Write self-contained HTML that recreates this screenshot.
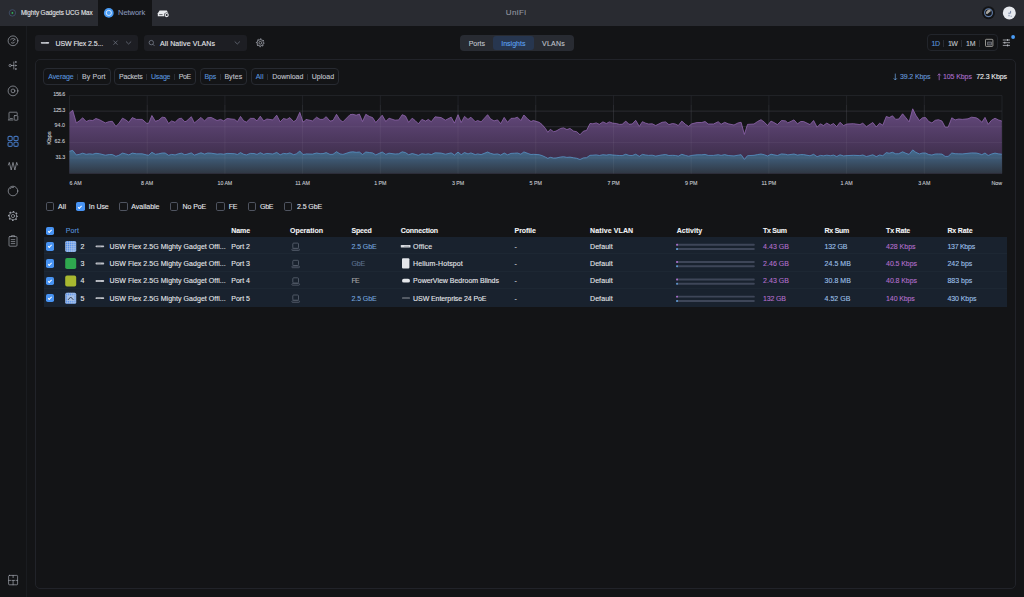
<!DOCTYPE html>
<html lang="en">
<head>
<meta charset="utf-8">
<title>UniFi Network</title>
<style>
html,body{margin:0;padding:0;background:#131416;}
body{width:1024px;height:597px;position:relative;overflow:hidden;font-family:"Liberation Sans",sans-serif;}
.abs{position:absolute;}
.t{position:absolute;white-space:pre;font-family:"Liberation Sans",sans-serif;-webkit-text-stroke:0.1px currentColor;}
.box{position:absolute;box-sizing:border-box;}
.grp{position:absolute;box-sizing:border-box;border:1px solid #272a31;border-radius:4px;top:68.4px;height:16.3px;}
.sep{position:absolute;width:1px;background:#292c33;}
.cb{position:absolute;box-sizing:border-box;width:8.4px;height:8.4px;border:1px solid #4f5460;border-radius:1.8px;}
.cb.on{border:none;background:#4793f3;}
.cb.on:after{content:"";position:absolute;left:3.2px;top:2.2px;width:1.3px;height:2.7px;border:solid #f4f8ff;border-width:0 0.75px 0.75px 0;transform:rotate(45deg);}
.row{position:absolute;left:43.6px;width:963.6px;height:17.45px;background:#19222e;box-sizing:border-box;border-bottom:1px solid #1d2733;}
</style>
</head>
<body>
<!-- top bar -->
<div class="box" style="left:0;top:0;width:1024px;height:26px;background:#292b31"></div>
<div class="box" style="left:97.5px;top:0;width:54px;height:26px;background:#131416"></div>
<!-- sidebar -->
<div class="box" style="left:0;top:26px;width:27px;height:571px;border-right:1px solid #1a1c20"></div>
<!-- toolbar -->
<div class="box" style="left:35px;top:35px;width:103px;height:16px;background:#1d1e23;border-radius:3px"></div>
<div class="box" style="left:144px;top:35px;width:103px;height:16px;background:#1d1e23;border-radius:3px"></div>
<div class="box" style="left:459.5px;top:34.5px;width:114.3px;height:16.3px;background:#282b32;border-radius:4px"></div>
<div class="box" style="left:493.2px;top:35.5px;width:40.6px;height:14.4px;background:#27364f;border-radius:3px"></div>
<div class="box" style="left:927px;top:34.4px;width:71.4px;height:16.4px;border:1px solid #22252b;border-radius:4px"></div>
<div class="sep" style="left:943px;top:39.5px;height:7px"></div>
<div class="sep" style="left:961.3px;top:39.5px;height:7px"></div>
<div class="sep" style="left:979.2px;top:39.5px;height:7px"></div>
<!-- card -->
<div class="box" style="left:35px;top:59.2px;width:981px;height:529.4px;border:1px solid #212329;border-radius:5px"></div>
<div class="grp" style="left:43px;width:67.7px"></div><div class="sep" style="left:77.3px;top:73.5px;height:6.5px"></div>
<div class="grp" style="left:114.4px;width:81.4px"></div><div class="sep" style="left:146.4px;top:73.5px;height:6.5px"></div><div class="sep" style="left:174.3px;top:73.5px;height:6.5px"></div>
<div class="grp" style="left:200px;width:46.7px"></div><div class="sep" style="left:219.5px;top:73.5px;height:6.5px"></div>
<div class="grp" style="left:251px;width:88px"></div><div class="sep" style="left:267.1px;top:73.5px;height:6.5px"></div><div class="sep" style="left:307.4px;top:73.5px;height:6.5px"></div>
<svg class="abs" style="left:0;top:0" width="1024" height="200" viewBox="0 0 1024 200">
<defs>
<linearGradient id="gp" x1="0" y1="108" x2="0" y2="174" gradientUnits="userSpaceOnUse"><stop offset="0" stop-color="#664a7f"/><stop offset="1" stop-color="#31253b"/></linearGradient>
<linearGradient id="gb" x1="0" y1="150" x2="0" y2="174" gradientUnits="userSpaceOnUse"><stop offset="0" stop-color="#466d91"/><stop offset="1" stop-color="#2f3641"/></linearGradient>
</defs>
<g stroke="#2a2c33" stroke-width="0.6" fill="none">
<path d="M69.5,95.50 H1002"/><path d="M69.5,111.12 H1002"/><path d="M69.5,126.74 H1002"/><path d="M69.5,142.36 H1002"/><path d="M69.5,157.98 H1002"/><path d="M69.5,173.60 H1002"/>
<path d="M69.50,95.5 V173.6"/><path d="M147.21,95.5 V173.6"/><path d="M224.92,95.5 V173.6"/><path d="M302.62,95.5 V173.6"/><path d="M380.33,95.5 V173.6"/><path d="M458.04,95.5 V173.6"/><path d="M535.75,95.5 V173.6"/><path d="M613.46,95.5 V173.6"/><path d="M691.17,95.5 V173.6"/><path d="M768.88,95.5 V173.6"/><path d="M846.58,95.5 V173.6"/><path d="M924.29,95.5 V173.6"/><path d="M1002.00,95.5 V173.6"/>
</g>
<path d="M69.5,112.9 L72.7,110.3 L76.3,122.9 L79.1,121.1 L82.7,117.8 L86.2,121.5 L89.5,120.2 L92.7,120.5 L95.9,118.5 L99.4,119.7 L105.3,122.9 L109.4,121.5 L112.3,121.3 L115.9,126.4 L118.8,123.5 L122.5,118.2 L125.8,119.9 L128.8,122.3 L132.3,117.6 L136.4,119.4 L142.2,119.4 L146.9,123.5 L148.7,123.2 L151.9,115.5 L155.4,121.3 L158.7,120.2 L162.2,117.2 L165.1,117.6 L168.6,123.5 L171.6,120.9 L175.1,122.3 L178.6,118.8 L181.5,118.2 L184.5,121.5 L186.0,121.5 L191.3,116.7 L194.4,122.9 L201.0,117.4 L204.5,120.9 L207.7,117.8 L211.2,117.4 L217.1,120.5 L220.6,119.4 L223.8,120.9 L227.1,118.5 L234.7,119.4 L237.4,121.7 L240.5,116.4 L243.7,120.9 L246.4,122.1 L250.3,118.4 L254.0,118.4 L257.0,120.9 L260.3,116.2 L263.7,120.9 L266.9,119.0 L272.8,119.9 L276.7,115.2 L280.2,121.9 L283.4,118.5 L286.9,119.4 L289.8,117.6 L293.7,121.7 L296.3,119.9 L299.8,112.3 L303.0,122.1 L305.6,120.2 L306.0,119.4 L312.5,120.9 L316.6,117.2 L320.1,119.4 L323.0,119.4 L326.2,116.7 L330.0,121.1 L333.0,120.5 L336.5,114.3 L340.0,119.9 L342.9,121.9 L350.0,114.7 L352.9,114.3 L356.2,115.2 L359.4,114.1 L362.5,121.5 L365.8,114.3 L369.3,116.4 L372.6,117.6 L375.8,122.5 L382.2,115.2 L385.8,121.5 L389.0,118.2 L395.1,120.2 L398.7,119.9 L402.2,114.7 L405.5,116.1 L408.6,122.3 L412.2,118.2 L415.1,120.5 L418.4,123.8 L421.9,119.4 L425.6,121.1 L428.3,119.4 L431.3,121.7 L435.1,116.8 L441.2,117.6 L445.4,120.2 L451.2,117.2 L454.5,123.1 L458.0,114.7 L461.2,122.5 L464.5,116.4 L468.0,119.4 L470.9,117.2 L475.3,121.7 L477.6,120.5 L481.1,121.9 L487.6,114.7 L490.5,118.8 L494.0,120.9 L497.6,119.9 L500.7,123.7 L504.2,117.4 L507.5,122.3 L511.0,118.4 L514.6,118.2 L517.5,117.2 L520.8,120.5 L523.9,115.0 L528.1,119.4 L531.0,121.5 L533.3,120.5 L539.2,122.3 L542.1,124.6 L545.6,128.7 L547.8,132.3 L550.3,129.3 L553.6,131.7 L556.0,131.1 L560.7,128.4 L563.6,127.9 L566.9,129.6 L570.0,128.4 L573.6,131.1 L576.7,131.7 L580.0,134.8 L583.5,131.1 L586.5,130.5 L590.0,123.5 L592.9,123.8 L596.2,122.9 L599.4,124.3 L602.9,121.9 L606.4,123.5 L609.3,121.9 L612.9,123.2 L616.4,123.5 L619.3,124.4 L622.2,124.3 L625.8,121.1 L629.0,124.3 L632.2,124.0 L635.7,120.3 L639.3,126.4 L642.4,121.7 L645.7,123.2 L648.6,124.0 L652.2,123.8 L655.7,125.5 L662.1,122.3 L665.6,121.9 L668.9,124.6 L672.5,123.5 L675.4,124.0 L678.3,125.5 L681.8,121.1 L685.4,124.3 L688.5,126.4 L691.8,123.8 L697.1,122.5 L701.8,122.5 L705.1,121.5 L708.2,124.0 L713.5,124.0 L718.2,121.7 L721.1,124.3 L724.7,122.3 L728.2,123.8 L734.0,125.0 L738.1,122.9 L741.1,122.3 L744.4,134.4 L747.5,124.4 L754.0,124.0 L757.5,121.5 L761.0,119.7 L764.5,122.3 L767.5,125.5 L771.0,121.1 L773.9,122.5 L777.4,124.6 L781.5,120.5 L785.6,120.9 L787.8,122.9 L794.0,119.9 L797.5,123.8 L800.7,121.5 L803.6,121.5 L810.0,124.6 L813.6,120.5 L817.1,127.2 L820.4,123.8 L823.5,125.5 L826.8,123.1 L830.3,125.2 L833.5,123.5 L836.7,126.7 L840.0,122.3 L843.5,125.5 L847.0,124.0 L853.4,123.7 L859.9,124.6 L862.8,123.2 L866.4,126.7 L872.8,122.5 L876.3,127.0 L879.6,123.2 L882.8,125.2 L886.3,116.4 L889.2,117.6 L892.5,115.8 L895.7,119.4 L898.8,119.0 L902.6,113.8 L905.9,117.8 L909.1,121.9 L912.7,108.8 L915.8,115.2 L919.4,120.5 L922.5,117.8 L925.6,117.6 L928.7,121.5 L931.9,122.9 L935.2,120.3 L938.5,119.7 L942.0,121.1 L945.2,127.2 L948.1,127.2 L951.8,117.8 L955.1,119.9 L958.7,119.0 L962.2,119.4 L968.0,118.8 L971.6,117.2 L976.2,117.8 L979.2,119.6 L981.8,122.3 L985.0,117.4 L988.2,124.3 L991.5,120.3 L995.0,118.2 L998.3,119.9 L1001.8,121.1 L1002,173.6 L69.5,173.6 Z" fill="url(#gp)"/>
<path d="M69.5,112.9 L72.7,110.3 L76.3,122.9 L79.1,121.1 L82.7,117.8 L86.2,121.5 L89.5,120.2 L92.7,120.5 L95.9,118.5 L99.4,119.7 L105.3,122.9 L109.4,121.5 L112.3,121.3 L115.9,126.4 L118.8,123.5 L122.5,118.2 L125.8,119.9 L128.8,122.3 L132.3,117.6 L136.4,119.4 L142.2,119.4 L146.9,123.5 L148.7,123.2 L151.9,115.5 L155.4,121.3 L158.7,120.2 L162.2,117.2 L165.1,117.6 L168.6,123.5 L171.6,120.9 L175.1,122.3 L178.6,118.8 L181.5,118.2 L184.5,121.5 L186.0,121.5 L191.3,116.7 L194.4,122.9 L201.0,117.4 L204.5,120.9 L207.7,117.8 L211.2,117.4 L217.1,120.5 L220.6,119.4 L223.8,120.9 L227.1,118.5 L234.7,119.4 L237.4,121.7 L240.5,116.4 L243.7,120.9 L246.4,122.1 L250.3,118.4 L254.0,118.4 L257.0,120.9 L260.3,116.2 L263.7,120.9 L266.9,119.0 L272.8,119.9 L276.7,115.2 L280.2,121.9 L283.4,118.5 L286.9,119.4 L289.8,117.6 L293.7,121.7 L296.3,119.9 L299.8,112.3 L303.0,122.1 L305.6,120.2 L306.0,119.4 L312.5,120.9 L316.6,117.2 L320.1,119.4 L323.0,119.4 L326.2,116.7 L330.0,121.1 L333.0,120.5 L336.5,114.3 L340.0,119.9 L342.9,121.9 L350.0,114.7 L352.9,114.3 L356.2,115.2 L359.4,114.1 L362.5,121.5 L365.8,114.3 L369.3,116.4 L372.6,117.6 L375.8,122.5 L382.2,115.2 L385.8,121.5 L389.0,118.2 L395.1,120.2 L398.7,119.9 L402.2,114.7 L405.5,116.1 L408.6,122.3 L412.2,118.2 L415.1,120.5 L418.4,123.8 L421.9,119.4 L425.6,121.1 L428.3,119.4 L431.3,121.7 L435.1,116.8 L441.2,117.6 L445.4,120.2 L451.2,117.2 L454.5,123.1 L458.0,114.7 L461.2,122.5 L464.5,116.4 L468.0,119.4 L470.9,117.2 L475.3,121.7 L477.6,120.5 L481.1,121.9 L487.6,114.7 L490.5,118.8 L494.0,120.9 L497.6,119.9 L500.7,123.7 L504.2,117.4 L507.5,122.3 L511.0,118.4 L514.6,118.2 L517.5,117.2 L520.8,120.5 L523.9,115.0 L528.1,119.4 L531.0,121.5 L533.3,120.5 L539.2,122.3 L542.1,124.6 L545.6,128.7 L547.8,132.3 L550.3,129.3 L553.6,131.7 L556.0,131.1 L560.7,128.4 L563.6,127.9 L566.9,129.6 L570.0,128.4 L573.6,131.1 L576.7,131.7 L580.0,134.8 L583.5,131.1 L586.5,130.5 L590.0,123.5 L592.9,123.8 L596.2,122.9 L599.4,124.3 L602.9,121.9 L606.4,123.5 L609.3,121.9 L612.9,123.2 L616.4,123.5 L619.3,124.4 L622.2,124.3 L625.8,121.1 L629.0,124.3 L632.2,124.0 L635.7,120.3 L639.3,126.4 L642.4,121.7 L645.7,123.2 L648.6,124.0 L652.2,123.8 L655.7,125.5 L662.1,122.3 L665.6,121.9 L668.9,124.6 L672.5,123.5 L675.4,124.0 L678.3,125.5 L681.8,121.1 L685.4,124.3 L688.5,126.4 L691.8,123.8 L697.1,122.5 L701.8,122.5 L705.1,121.5 L708.2,124.0 L713.5,124.0 L718.2,121.7 L721.1,124.3 L724.7,122.3 L728.2,123.8 L734.0,125.0 L738.1,122.9 L741.1,122.3 L744.4,134.4 L747.5,124.4 L754.0,124.0 L757.5,121.5 L761.0,119.7 L764.5,122.3 L767.5,125.5 L771.0,121.1 L773.9,122.5 L777.4,124.6 L781.5,120.5 L785.6,120.9 L787.8,122.9 L794.0,119.9 L797.5,123.8 L800.7,121.5 L803.6,121.5 L810.0,124.6 L813.6,120.5 L817.1,127.2 L820.4,123.8 L823.5,125.5 L826.8,123.1 L830.3,125.2 L833.5,123.5 L836.7,126.7 L840.0,122.3 L843.5,125.5 L847.0,124.0 L853.4,123.7 L859.9,124.6 L862.8,123.2 L866.4,126.7 L872.8,122.5 L876.3,127.0 L879.6,123.2 L882.8,125.2 L886.3,116.4 L889.2,117.6 L892.5,115.8 L895.7,119.4 L898.8,119.0 L902.6,113.8 L905.9,117.8 L909.1,121.9 L912.7,108.8 L915.8,115.2 L919.4,120.5 L922.5,117.8 L925.6,117.6 L928.7,121.5 L931.9,122.9 L935.2,120.3 L938.5,119.7 L942.0,121.1 L945.2,127.2 L948.1,127.2 L951.8,117.8 L955.1,119.9 L958.7,119.0 L962.2,119.4 L968.0,118.8 L971.6,117.2 L976.2,117.8 L979.2,119.6 L981.8,122.3 L985.0,117.4 L988.2,124.3 L991.5,120.3 L995.0,118.2 L998.3,119.9 L1001.8,121.1" fill="none" stroke="#9166ae" stroke-width="0.8" stroke-linejoin="round"/>
<path d="M69.5,151.2 L72.7,150.4 L76.3,154.9 L79.1,154.4 L82.7,153.2 L86.2,154.3 L89.5,153.8 L92.7,154.2 L95.9,153.3 L99.4,153.7 L105.3,155.2 L109.4,154.5 L112.3,154.5 L115.9,156.3 L118.8,155.3 L122.5,153.1 L125.8,153.9 L128.8,154.9 L132.3,153.1 L136.4,153.8 L142.2,153.8 L146.9,155.0 L148.7,155.2 L151.9,152.3 L155.4,154.3 L158.7,153.8 L162.2,153.0 L165.1,153.0 L168.6,155.3 L171.6,154.4 L175.1,154.9 L178.6,153.7 L181.5,153.2 L184.5,154.6 L186.0,154.5 L191.3,152.9 L194.4,155.1 L201.0,152.8 L204.5,154.1 L207.7,153.0 L211.2,153.2 L217.1,154.1 L220.6,153.8 L223.8,154.2 L227.1,153.4 L234.7,153.7 L237.4,154.5 L240.5,152.6 L243.7,154.3 L246.4,154.9 L250.3,153.4 L254.0,153.5 L257.0,154.4 L260.3,152.7 L263.7,154.3 L266.9,153.4 L272.8,154.0 L276.7,152.4 L280.2,154.8 L283.4,153.4 L286.9,153.8 L289.8,152.9 L293.7,154.7 L296.3,153.9 L299.8,151.0 L303.0,154.5 L305.6,154.1 L306.0,153.9 L312.5,154.1 L316.6,153.0 L320.1,153.7 L323.0,153.6 L326.2,152.6 L330.0,154.4 L333.0,154.3 L336.5,151.7 L340.0,153.9 L342.9,154.4 L350.0,152.1 L352.9,151.8 L356.2,152.3 L359.4,152.0 L362.5,154.5 L365.8,152.0 L369.3,152.5 L372.6,152.9 L375.8,154.9 L382.2,152.0 L385.8,154.4 L389.0,153.2 L395.1,154.0 L398.7,153.8 L402.2,151.8 L405.5,152.6 L408.6,154.7 L412.2,153.5 L415.1,154.3 L418.4,155.3 L421.9,153.7 L425.6,154.3 L428.3,153.8 L431.3,154.6 L435.1,152.8 L441.2,153.1 L445.4,154.2 L451.2,152.9 L454.5,155.0 L458.0,152.1 L461.2,154.7 L464.5,152.5 L468.0,153.9 L470.9,152.9 L475.3,154.6 L477.6,153.9 L481.1,154.6 L487.6,152.0 L490.5,153.3 L494.0,154.3 L497.6,153.9 L500.7,155.1 L504.2,153.0 L507.5,154.8 L511.0,153.4 L514.6,153.2 L517.5,153.0 L520.8,154.2 L523.9,151.9 L528.1,153.5 L531.0,154.5 L533.3,154.3 L539.2,154.7 L542.1,155.6 L545.6,157.2 L547.8,158.4 L550.3,157.3 L553.6,158.1 L556.0,158.0 L560.7,157.0 L563.6,156.7 L566.9,157.4 L570.0,157.1 L573.6,157.8 L576.7,158.3 L580.0,159.5 L583.5,157.9 L586.5,157.7 L590.0,155.3 L592.9,155.2 L596.2,154.9 L599.4,155.5 L602.9,154.7 L606.4,155.1 L609.3,154.6 L612.9,155.0 L616.4,155.3 L619.3,155.5 L622.2,155.6 L625.8,154.2 L629.0,155.4 L632.2,155.5 L635.7,154.2 L639.3,156.3 L642.4,154.4 L645.7,155.0 L648.6,155.4 L652.2,155.2 L655.7,156.1 L662.1,154.9 L665.6,154.5 L668.9,155.5 L672.5,155.3 L675.4,155.5 L678.3,156.1 L681.8,154.3 L685.4,155.4 L688.5,156.2 L691.8,155.4 L697.1,154.8 L701.8,154.8 L705.1,154.4 L708.2,155.4 L713.5,155.4 L718.2,154.7 L721.1,155.4 L724.7,154.6 L728.2,155.5 L734.0,155.9 L738.1,155.2 L741.1,154.7 L744.4,159.4 L747.5,155.7 L754.0,155.3 L757.5,154.6 L761.0,154.0 L764.5,154.8 L767.5,156.0 L771.0,154.2 L773.9,154.8 L777.4,155.5 L781.5,153.9 L785.6,154.3 L787.8,154.9 L794.0,154.0 L797.5,155.1 L800.7,154.6 L803.6,154.6 L810.0,155.8 L813.6,154.3 L817.1,156.7 L820.4,155.4 L823.5,155.8 L826.8,155.2 L830.3,155.7 L833.5,155.1 L836.7,156.5 L840.0,154.8 L843.5,155.9 L847.0,155.6 L853.4,155.3 L859.9,155.6 L862.8,155.0 L866.4,156.5 L872.8,154.8 L876.3,156.6 L879.6,155.0 L882.8,155.7 L886.3,152.6 L889.2,153.2 L892.5,152.3 L895.7,153.8 L898.8,153.7 L902.6,151.8 L905.9,153.3 L909.1,154.4 L912.7,149.9 L915.8,152.3 L919.4,153.9 L922.5,153.0 L925.6,153.0 L928.7,154.5 L931.9,155.0 L935.2,154.0 L938.5,153.9 L942.0,154.1 L945.2,156.4 L948.1,156.4 L951.8,153.0 L955.1,153.7 L958.7,153.8 L962.2,153.9 L968.0,153.3 L971.6,152.9 L976.2,153.0 L979.2,153.7 L981.8,154.7 L985.0,153.0 L988.2,155.5 L991.5,154.0 L995.0,153.1 L998.3,153.8 L1001.8,154.2 L1002,173.6 L69.5,173.6 Z" fill="url(#gb)"/>
<path d="M69.5,151.2 L72.7,150.4 L76.3,154.9 L79.1,154.4 L82.7,153.2 L86.2,154.3 L89.5,153.8 L92.7,154.2 L95.9,153.3 L99.4,153.7 L105.3,155.2 L109.4,154.5 L112.3,154.5 L115.9,156.3 L118.8,155.3 L122.5,153.1 L125.8,153.9 L128.8,154.9 L132.3,153.1 L136.4,153.8 L142.2,153.8 L146.9,155.0 L148.7,155.2 L151.9,152.3 L155.4,154.3 L158.7,153.8 L162.2,153.0 L165.1,153.0 L168.6,155.3 L171.6,154.4 L175.1,154.9 L178.6,153.7 L181.5,153.2 L184.5,154.6 L186.0,154.5 L191.3,152.9 L194.4,155.1 L201.0,152.8 L204.5,154.1 L207.7,153.0 L211.2,153.2 L217.1,154.1 L220.6,153.8 L223.8,154.2 L227.1,153.4 L234.7,153.7 L237.4,154.5 L240.5,152.6 L243.7,154.3 L246.4,154.9 L250.3,153.4 L254.0,153.5 L257.0,154.4 L260.3,152.7 L263.7,154.3 L266.9,153.4 L272.8,154.0 L276.7,152.4 L280.2,154.8 L283.4,153.4 L286.9,153.8 L289.8,152.9 L293.7,154.7 L296.3,153.9 L299.8,151.0 L303.0,154.5 L305.6,154.1 L306.0,153.9 L312.5,154.1 L316.6,153.0 L320.1,153.7 L323.0,153.6 L326.2,152.6 L330.0,154.4 L333.0,154.3 L336.5,151.7 L340.0,153.9 L342.9,154.4 L350.0,152.1 L352.9,151.8 L356.2,152.3 L359.4,152.0 L362.5,154.5 L365.8,152.0 L369.3,152.5 L372.6,152.9 L375.8,154.9 L382.2,152.0 L385.8,154.4 L389.0,153.2 L395.1,154.0 L398.7,153.8 L402.2,151.8 L405.5,152.6 L408.6,154.7 L412.2,153.5 L415.1,154.3 L418.4,155.3 L421.9,153.7 L425.6,154.3 L428.3,153.8 L431.3,154.6 L435.1,152.8 L441.2,153.1 L445.4,154.2 L451.2,152.9 L454.5,155.0 L458.0,152.1 L461.2,154.7 L464.5,152.5 L468.0,153.9 L470.9,152.9 L475.3,154.6 L477.6,153.9 L481.1,154.6 L487.6,152.0 L490.5,153.3 L494.0,154.3 L497.6,153.9 L500.7,155.1 L504.2,153.0 L507.5,154.8 L511.0,153.4 L514.6,153.2 L517.5,153.0 L520.8,154.2 L523.9,151.9 L528.1,153.5 L531.0,154.5 L533.3,154.3 L539.2,154.7 L542.1,155.6 L545.6,157.2 L547.8,158.4 L550.3,157.3 L553.6,158.1 L556.0,158.0 L560.7,157.0 L563.6,156.7 L566.9,157.4 L570.0,157.1 L573.6,157.8 L576.7,158.3 L580.0,159.5 L583.5,157.9 L586.5,157.7 L590.0,155.3 L592.9,155.2 L596.2,154.9 L599.4,155.5 L602.9,154.7 L606.4,155.1 L609.3,154.6 L612.9,155.0 L616.4,155.3 L619.3,155.5 L622.2,155.6 L625.8,154.2 L629.0,155.4 L632.2,155.5 L635.7,154.2 L639.3,156.3 L642.4,154.4 L645.7,155.0 L648.6,155.4 L652.2,155.2 L655.7,156.1 L662.1,154.9 L665.6,154.5 L668.9,155.5 L672.5,155.3 L675.4,155.5 L678.3,156.1 L681.8,154.3 L685.4,155.4 L688.5,156.2 L691.8,155.4 L697.1,154.8 L701.8,154.8 L705.1,154.4 L708.2,155.4 L713.5,155.4 L718.2,154.7 L721.1,155.4 L724.7,154.6 L728.2,155.5 L734.0,155.9 L738.1,155.2 L741.1,154.7 L744.4,159.4 L747.5,155.7 L754.0,155.3 L757.5,154.6 L761.0,154.0 L764.5,154.8 L767.5,156.0 L771.0,154.2 L773.9,154.8 L777.4,155.5 L781.5,153.9 L785.6,154.3 L787.8,154.9 L794.0,154.0 L797.5,155.1 L800.7,154.6 L803.6,154.6 L810.0,155.8 L813.6,154.3 L817.1,156.7 L820.4,155.4 L823.5,155.8 L826.8,155.2 L830.3,155.7 L833.5,155.1 L836.7,156.5 L840.0,154.8 L843.5,155.9 L847.0,155.6 L853.4,155.3 L859.9,155.6 L862.8,155.0 L866.4,156.5 L872.8,154.8 L876.3,156.6 L879.6,155.0 L882.8,155.7 L886.3,152.6 L889.2,153.2 L892.5,152.3 L895.7,153.8 L898.8,153.7 L902.6,151.8 L905.9,153.3 L909.1,154.4 L912.7,149.9 L915.8,152.3 L919.4,153.9 L922.5,153.0 L925.6,153.0 L928.7,154.5 L931.9,155.0 L935.2,154.0 L938.5,153.9 L942.0,154.1 L945.2,156.4 L948.1,156.4 L951.8,153.0 L955.1,153.7 L958.7,153.8 L962.2,153.9 L968.0,153.3 L971.6,152.9 L976.2,153.0 L979.2,153.7 L981.8,154.7 L985.0,153.0 L988.2,155.5 L991.5,154.0 L995.0,153.1 L998.3,153.8 L1001.8,154.2" fill="none" stroke="#5592c4" stroke-width="0.8" stroke-linejoin="round"/>
<g stroke="#ffffff" stroke-opacity="0.09" stroke-width="0.6" fill="none">
<path d="M69.5,111.12 H1002"/><path d="M69.5,126.74 H1002"/><path d="M69.5,142.36 H1002"/><path d="M69.5,157.98 H1002"/>
<path d="M147.21,105 V173.6"/><path d="M224.92,105 V173.6"/><path d="M302.62,105 V173.6"/><path d="M380.33,105 V173.6"/><path d="M458.04,105 V173.6"/><path d="M535.75,105 V173.6"/><path d="M613.46,105 V173.6"/><path d="M691.17,105 V173.6"/><path d="M768.88,105 V173.6"/><path d="M846.58,105 V173.6"/><path d="M924.29,105 V173.6"/>
</g>
</svg>
<span class="t" style="left:39.2px;top:133.6px;width:20px;height:8px;line-height:8px;font-size:6px;color:#d0d3d9;text-align:center;transform:rotate(-90deg);letter-spacing:-0.05px">Kbps</span>
<!-- filter checkboxes -->
<div class="cb" style="left:45.6px;top:202.4px"></div>
<div class="cb on" style="left:76.3px;top:202.4px"></div>
<div class="cb" style="left:119.2px;top:202.4px"></div>
<div class="cb" style="left:169.7px;top:202.4px"></div>
<div class="cb" style="left:216.2px;top:202.4px"></div>
<div class="cb" style="left:247.8px;top:202.4px"></div>
<div class="cb" style="left:284px;top:202.4px"></div>
<!-- table -->
<div class="cb on" style="left:45.6px;top:226.6px"></div>
<div class="row" style="top:237px"></div>
<div class="row" style="top:254.45px"></div>
<div class="row" style="top:271.9px"></div>
<div class="row" style="top:289.35px;border-bottom:none"></div>
<div class="cb on" style="left:45.6px;top:242.2px"></div>
<div class="cb on" style="left:45.6px;top:259.4px"></div>
<div class="cb on" style="left:45.6px;top:276.8px"></div>
<div class="cb on" style="left:45.6px;top:294px"></div>
<svg class="abs" style="left:0;top:0" width="1024" height="597" viewBox="0 0 1024 597" fill="none">
<defs><pattern id="dots" x="65.35" y="0.55" width="2.14" height="2.14" patternUnits="userSpaceOnUse"><circle cx="1.07" cy="1.07" r="0.66" fill="#4486ee"/></pattern></defs>
<rect x="65.2" y="240.9" width="11" height="11" rx="1.6" fill="#a7c0e6"/>
<rect x="65.2" y="240.9" width="11" height="11" rx="1.6" fill="url(#dots)"/>
<rect x="95.5" y="245.4" width="8.7" height="1.8" rx="0.9" fill="#bfc2c9"/>
<path d="M97.4,246.4 h3.6" stroke="#4d5159" stroke-width="0.5" stroke-dasharray="0.5 0.5"/>
<rect x="292.8" y="243.1" width="5.7" height="5.2" rx="0.9" stroke="#5c6472" stroke-width="0.8"/>
<rect x="291.8" y="248.9" width="7.7" height="1.6" rx="0.7" stroke="#5c6472" stroke-width="0.7"/>
<rect x="676.2" y="243.80" width="78.6" height="1.9" rx="0.9" fill="#3e4658"/>
<rect x="676.2" y="248.10" width="78.6" height="1.9" rx="0.9" fill="#3e4658"/>
<rect x="676.2" y="243.80" width="1.7" height="1.9" rx="0.6" fill="#b673d8"/>
<rect x="676.2" y="248.10" width="1.7" height="1.9" rx="0.6" fill="#62a0dc"/>
<rect x="65.2" y="258.1" width="11" height="11" rx="1.8" fill="#2fa84f"/>
<rect x="95.5" y="262.6" width="8.7" height="1.8" rx="0.9" fill="#bfc2c9"/>
<path d="M97.4,263.6 h3.6" stroke="#4d5159" stroke-width="0.5" stroke-dasharray="0.5 0.5"/>
<rect x="292.8" y="260.3" width="5.7" height="5.2" rx="0.9" stroke="#5c6472" stroke-width="0.8"/>
<rect x="291.8" y="266.1" width="7.7" height="1.6" rx="0.7" stroke="#5c6472" stroke-width="0.7"/>
<rect x="676.2" y="261.00" width="78.6" height="1.9" rx="0.9" fill="#3e4658"/>
<rect x="676.2" y="265.30" width="78.6" height="1.9" rx="0.9" fill="#3e4658"/>
<rect x="676.2" y="261.00" width="1.7" height="1.9" rx="0.6" fill="#b673d8"/>
<rect x="676.2" y="265.30" width="1.7" height="1.9" rx="0.6" fill="#62a0dc"/>
<rect x="65.2" y="275.6" width="11" height="11" rx="1.8" fill="#a8b830"/>
<rect x="95.5" y="280.1" width="8.7" height="1.8" rx="0.9" fill="#bfc2c9"/>
<path d="M97.4,281.1 h3.6" stroke="#4d5159" stroke-width="0.5" stroke-dasharray="0.5 0.5"/>
<rect x="292.8" y="277.8" width="5.7" height="5.2" rx="0.9" stroke="#5c6472" stroke-width="0.8"/>
<rect x="291.8" y="283.6" width="7.7" height="1.6" rx="0.7" stroke="#5c6472" stroke-width="0.7"/>
<rect x="676.2" y="278.50" width="78.6" height="1.9" rx="0.9" fill="#3e4658"/>
<rect x="676.2" y="282.80" width="78.6" height="1.9" rx="0.9" fill="#3e4658"/>
<rect x="676.2" y="278.50" width="1.7" height="1.9" rx="0.6" fill="#b673d8"/>
<rect x="676.2" y="282.80" width="1.7" height="1.9" rx="0.6" fill="#62a0dc"/>
<rect x="65.2" y="292.8" width="11" height="11" rx="1.6" fill="#a7c0e6"/>
<rect x="65.2" y="292.8" width="11" height="11" rx="1.6" fill="url(#dots)"/>
<rect x="67.4" y="295.7" width="6.6" height="5.2" fill="#a7c0e6"/>
<path d="M68,299.9 l2.7,-2.9 l2.7,2.9" stroke="#2b3648" stroke-width="0.9" />
<rect x="95.5" y="297.3" width="8.7" height="1.8" rx="0.9" fill="#bfc2c9"/>
<path d="M97.4,298.3 h3.6" stroke="#4d5159" stroke-width="0.5" stroke-dasharray="0.5 0.5"/>
<rect x="292.8" y="295.0" width="5.7" height="5.2" rx="0.9" stroke="#5c6472" stroke-width="0.8"/>
<rect x="291.8" y="300.8" width="7.7" height="1.6" rx="0.7" stroke="#5c6472" stroke-width="0.7"/>
<rect x="676.2" y="295.70" width="78.6" height="1.9" rx="0.9" fill="#3e4658"/>
<rect x="676.2" y="300.00" width="78.6" height="1.9" rx="0.9" fill="#3e4658"/>
<rect x="676.2" y="295.70" width="1.7" height="1.9" rx="0.6" fill="#b673d8"/>
<rect x="676.2" y="300.00" width="1.7" height="1.9" rx="0.6" fill="#62a0dc"/>
<rect x="400.8" y="245.0" width="9.7" height="2.5" rx="0.6" fill="#d8dbe0"/><path d="M404.6,246.3 h4.4" stroke="#4d5159" stroke-width="0.7" stroke-dasharray="0.6 0.5"/>
<rect x="402" y="258.2" width="7.4" height="10.2" rx="1" fill="#e4e6ea"/>
<rect x="402" y="278.8" width="8" height="3.8" rx="1.9" fill="#e4e6ea"/>
<rect x="402" y="297.5" width="8" height="1.1" rx="0.5" fill="#8f949c"/>
</svg>
<svg class="abs" style="left:0;top:0" width="1024" height="597" viewBox="0 0 1024 597" fill="none">
<!-- top bar: tab1 icon -->
<circle cx="12.4" cy="12.9" r="3.2" stroke="#435370" stroke-width="0.8"/>
<circle cx="12.4" cy="12.9" r="0.85" fill="#2fbe5a"/>
<!-- network icon -->
<circle cx="108.8" cy="12.9" r="4.9" fill="#4a9cf5"/>
<circle cx="108.8" cy="12.9" r="2.6" stroke="#eaf2fd" stroke-width="0.85"/>
<!-- console + gear icon -->
<path d="M159.6,10.4 h7.2 l1.4,2.6 v3.2 h-10.4 v-3 z" fill="#e9ebee"/>
<path d="M159.2,14.6 h3.4" stroke="#292b31" stroke-width="0.7"/>
<circle cx="166.7" cy="15.1" r="2.6" fill="#292b31"/>
<circle cx="166.7" cy="15.1" r="1.55" stroke="#e9ebee" stroke-width="1.1"/>
<!-- right icons -->
<circle cx="988.5" cy="12.7" r="6.5" fill="#131416"/>
<circle cx="988.5" cy="12.7" r="3.9" stroke="#5f7aa3" stroke-width="1.2" fill="#14161a"/>
<path d="M985.9,13.4 a3,2 -40 0 1 4.4,-3.6 l0.7,1.1 l-3.9,3.4 z" fill="#aba79f"/>
<circle cx="1009.3" cy="12.9" r="6.5" fill="#e6e9ee"/>
<path d="M1008.3,13.2 h2.3 v-2.3 M1009,14.8 v1.5 M1011.2,15.8 v0.9" stroke="#6f7ea0" stroke-width="0.95"/>
<!-- sidebar -->
<g stroke="#a4a8b1" stroke-width="0.68" stroke-linecap="round" stroke-linejoin="round">
<circle cx="13" cy="40.8" r="4.9"/>
<path d="M10.6,39.6 a3,3 0 0 1 4.8,0 M11.2,42.6 a2,2 0 0 0 3.4,-0.4 M13,41 l1.6,-1.4"/>
<circle cx="10.2" cy="65.5" r="1.2"/>
<path d="M11.4,65.5 h2.4 M13.8,62 v7"/>
<circle cx="15.7" cy="62" r="0.5"/><circle cx="15.7" cy="65.5" r="0.5"/><circle cx="15.7" cy="69" r="0.5"/>
<circle cx="13" cy="90.9" r="4.9"/><circle cx="13" cy="90.9" r="1.9"/>
<path d="M9,119.5 v-6.6 a0.7,0.7 0 0 1 0.7,-0.7 h6.8 a0.7,0.7 0 0 1 0.7,0.7 v1.6 M8.3,120 h4.6"/>
<rect x="14.2" y="115.6" width="3.6" height="4.6" rx="0.6"/>
<path d="M10.4,118.6 h2"/>
<path d="M8.4,165 l0.9,-2.6 l1.9,7.6 l1.8,-7.6 l1.9,7.6 l1.8,-7.6 l0.9,2.6"/>
<circle cx="13" cy="191" r="4.8"/>
<path d="M10,188.6 a4.4,4.4 0 0 1 3.6,-1.4"/>
<circle cx="13" cy="216" r="1.6"/>
<circle cx="13" cy="216" r="3.7"/>
<circle cx="13" cy="216" r="4.5" stroke-width="1.1" stroke-dasharray="1.5 2.034" stroke-dashoffset="0.75" stroke-linecap="butt"/>
<rect x="9" y="236.6" width="8" height="9.6" rx="0.9"/>
<path d="M11.4,236.6 v-0.9 h3.2 v0.9 M11.2,239.6 h3.6 M11.2,241.6 h3.6 M11.2,243.6 h3.6"/>
<rect x="8.6" y="575.4" width="9" height="9.4" rx="0.8"/>
<path d="M13.1,575.4 v2.2 M13.1,580.4 v4.4 M8.6,580.4 h2.2 M12,580.4 h2.6 M16,580.4 h1.6"/>
</g>
<!-- active sidebar icon -->
<g stroke="#4272b8" stroke-width="1.1">
<rect x="8" y="136.4" width="4.2" height="4.2" rx="1.2"/><rect x="13.9" y="136.4" width="4.2" height="4.2" rx="1.2"/>
<rect x="8" y="142.2" width="4.2" height="4.2" rx="1.2"/><rect x="13.9" y="142.2" width="4.2" height="4.2" rx="1.2"/>
</g>
<!-- toolbar icons -->
<rect x="40.8" y="41.95" width="8.4" height="1.7" rx="0.8" fill="#c9ccd2"/>
<path d="M42.6,42.8 h3.4" stroke="#55585f" stroke-width="0.5" stroke-dasharray="0.5 0.5"/>
<path d="M113.7,40.9 l3.6,3.6 M117.3,40.9 l-3.6,3.6 M126.3,41.8 l2.3,2.2 l2.3,-2.2 M235,41.8 l2.3,2.2 l2.3,-2.2" stroke="#727987" stroke-width="0.7" stroke-linecap="round"/>
<circle cx="151.3" cy="42.6" r="2.2" stroke="#7b828f" stroke-width="0.75"/><path d="M152.9,44.3 l1.3,1.3" stroke="#7b828f" stroke-width="0.75" stroke-linecap="round"/>
<g stroke="#aaaeb7" stroke-width="0.7"><circle cx="260.3" cy="42.8" r="1.4"/><circle cx="260.3" cy="42.8" r="3.2"/>
<circle cx="260.3" cy="42.8" r="3.9" stroke-width="1" stroke-dasharray="1.3 1.763" stroke-dashoffset="0.65"/></g>
<!-- calendar + filter -->
<rect x="985.5" y="39.3" width="7.4" height="7.1" rx="0.8" stroke="#b9b6b0" stroke-width="0.8"/>
<rect x="987.7" y="42" width="3.9" height="3" stroke="#8d8f95" stroke-width="0.6" fill="#3a3d45"/>
<path d="M1002.8,40 h7.2 M1002.8,42.7 h7.2 M1002.8,45.4 h7.2" stroke="#c0c3ca" stroke-width="0.75"/><path d="M1007.6,39 v2 M1004.8,41.7 v2 M1007.6,44.4 v2" stroke="#c0c3ca" stroke-width="0.9"/>
<circle cx="1013.1" cy="37" r="1.9" fill="#4a9cf5"/>
<!-- stats arrows -->
<path d="M895.3,73.6 v6.4 M893.7,78.3 l1.6,1.7 l1.6,-1.7" stroke="#6fa6e6" stroke-width="0.7"/>
<path d="M939.2,80.2 v-6.4 M937.6,75.5 l1.6,-1.7 l1.6,1.7" stroke="#b673d8" stroke-width="0.7"/>
</svg>

<span class="t" style="left:20.9px;top:9.1px;font-size:6.3px;line-height:8.19px;letter-spacing:-0.082px;color:#e6e8ec;font-weight:400">Mighty Gadgets UCG Max</span>
<span class="t" style="left:118.0px;top:8.3px;font-size:7.5px;line-height:9.75px;letter-spacing:-0.031px;color:#8593b6;font-weight:400">Network</span>
<span class="t" style="left:505.8px;top:7.9px;font-size:8.0px;line-height:10.4px;letter-spacing:0.386px;color:#9598a1;font-weight:400">UniFi</span>
<span class="t" style="left:55.6px;top:38.5px;font-size:7.0px;line-height:9.1px;letter-spacing:-0.108px;color:#e6e8ec;font-weight:400">USW Flex 2.5...</span>
<span class="t" style="left:160.0px;top:38.5px;font-size:7.0px;line-height:9.1px;letter-spacing:0.106px;color:#e6e8ec;font-weight:400">All Native VLANs</span>
<span class="t" style="left:468.7px;top:38.5px;font-size:7.0px;line-height:9.1px;letter-spacing:-0.009px;color:#c1c5cd;font-weight:400">Ports</span>
<span class="t" style="left:501.2px;top:38.5px;font-size:7.0px;line-height:9.1px;letter-spacing:0.022px;color:#5ea2f2;font-weight:400">Insights</span>
<span class="t" style="left:542.0px;top:38.5px;font-size:7.0px;line-height:9.1px;letter-spacing:0.241px;color:#c1c5cd;font-weight:400">VLANs</span>
<span class="t" style="left:931.5px;top:38.5px;font-size:7.0px;line-height:9.1px;letter-spacing:-0.427px;color:#5993dc;font-weight:400">1D</span>
<span class="t" style="left:947.9px;top:38.5px;font-size:7.0px;line-height:9.1px;letter-spacing:-0.500px;color:#c1c5cd;font-weight:400">1W</span>
<span class="t" style="left:966.0px;top:38.5px;font-size:7.0px;line-height:9.1px;letter-spacing:-0.217px;color:#c1c5cd;font-weight:400">1M</span>
<span class="t" style="left:48.2px;top:72.3px;font-size:7.0px;line-height:9.1px;letter-spacing:-0.065px;color:#5993dc;font-weight:400">Average</span>
<span class="t" style="left:82.1px;top:72.3px;font-size:7.0px;line-height:9.1px;letter-spacing:0.078px;color:#c1c5cd;font-weight:400">By Port</span>
<span class="t" style="left:119.0px;top:72.3px;font-size:7.0px;line-height:9.1px;letter-spacing:-0.187px;color:#c1c5cd;font-weight:400">Packets</span>
<span class="t" style="left:151.0px;top:72.3px;font-size:7.0px;line-height:9.1px;letter-spacing:-0.187px;color:#5993dc;font-weight:400">Usage</span>
<span class="t" style="left:178.8px;top:72.3px;font-size:7.0px;line-height:9.1px;letter-spacing:-0.378px;color:#c1c5cd;font-weight:400">PoE</span>
<span class="t" style="left:204.6px;top:72.3px;font-size:7.0px;line-height:9.1px;letter-spacing:-0.221px;color:#5993dc;font-weight:400">Bps</span>
<span class="t" style="left:224.4px;top:72.3px;font-size:7.0px;line-height:9.1px;letter-spacing:0.057px;color:#c1c5cd;font-weight:400">Bytes</span>
<span class="t" style="left:255.7px;top:72.3px;font-size:7.0px;line-height:9.1px;letter-spacing:0.006px;color:#5993dc;font-weight:400">All</span>
<span class="t" style="left:272.3px;top:72.3px;font-size:7.0px;line-height:9.1px;letter-spacing:-0.005px;color:#c1c5cd;font-weight:400">Download</span>
<span class="t" style="left:311.8px;top:72.3px;font-size:7.0px;line-height:9.1px;letter-spacing:0.019px;color:#c1c5cd;font-weight:400">Upload</span>
<span class="t" style="left:900.0px;top:72.2px;font-size:7.0px;line-height:9.1px;letter-spacing:-0.126px;color:#6699da;font-weight:400">39.2 Kbps</span>
<span class="t" style="left:943.0px;top:72.2px;font-size:7.0px;line-height:9.1px;letter-spacing:-0.099px;color:#ab6fcc;font-weight:400">105 Kbps</span>
<span class="t" style="left:976.2px;top:72.2px;font-size:7.0px;line-height:9.1px;letter-spacing:-0.081px;color:#f0f1f3;font-weight:400">72.3 Kbps</span>
<span class="t" style="left:53.3px;top:91.0px;font-size:5.3px;line-height:6.89px;letter-spacing:-0.333px;color:#c4c7ce;font-weight:400">156.6</span>
<span class="t" style="left:53.3px;top:106.6px;font-size:5.3px;line-height:6.89px;letter-spacing:-0.333px;color:#c4c7ce;font-weight:400">125.3</span>
<span class="t" style="left:54.4px;top:122.3px;font-size:5.3px;line-height:6.89px;letter-spacing:0.047px;color:#c4c7ce;font-weight:400">94.0</span>
<span class="t" style="left:54.6px;top:137.9px;font-size:5.3px;line-height:6.89px;letter-spacing:-0.003px;color:#c4c7ce;font-weight:400">62.6</span>
<span class="t" style="left:55.6px;top:153.6px;font-size:5.3px;line-height:6.89px;letter-spacing:-0.253px;color:#c4c7ce;font-weight:400">31.3</span>
<span class="t" style="left:69.5px;top:179.5px;font-size:5.3px;line-height:6.89px;letter-spacing:0.030px;color:#c4c7ce;font-weight:400">6 AM</span>
<span class="t" style="left:141.1px;top:179.5px;font-size:5.3px;line-height:6.89px;letter-spacing:0.030px;color:#c4c7ce;font-weight:400">8 AM</span>
<span class="t" style="left:217.6px;top:179.5px;font-size:5.3px;line-height:6.89px;letter-spacing:-0.086px;color:#c4c7ce;font-weight:400">10 AM</span>
<span class="t" style="left:295.3px;top:179.5px;font-size:5.3px;line-height:6.89px;letter-spacing:-0.005px;color:#c4c7ce;font-weight:400">11 AM</span>
<span class="t" style="left:374.2px;top:179.5px;font-size:5.3px;line-height:6.89px;letter-spacing:-0.044px;color:#c4c7ce;font-weight:400">1 PM</span>
<span class="t" style="left:451.9px;top:179.5px;font-size:5.3px;line-height:6.89px;letter-spacing:-0.044px;color:#c4c7ce;font-weight:400">3 PM</span>
<span class="t" style="left:529.6px;top:179.5px;font-size:5.3px;line-height:6.89px;letter-spacing:-0.044px;color:#c4c7ce;font-weight:400">5 PM</span>
<span class="t" style="left:607.4px;top:179.5px;font-size:5.3px;line-height:6.89px;letter-spacing:-0.044px;color:#c4c7ce;font-weight:400">7 PM</span>
<span class="t" style="left:685.1px;top:179.5px;font-size:5.3px;line-height:6.89px;letter-spacing:-0.044px;color:#c4c7ce;font-weight:400">9 PM</span>
<span class="t" style="left:761.6px;top:179.5px;font-size:5.3px;line-height:6.89px;letter-spacing:-0.064px;color:#c4c7ce;font-weight:400">11 PM</span>
<span class="t" style="left:840.5px;top:179.5px;font-size:5.3px;line-height:6.89px;letter-spacing:0.030px;color:#c4c7ce;font-weight:400">1 AM</span>
<span class="t" style="left:918.2px;top:179.5px;font-size:5.3px;line-height:6.89px;letter-spacing:0.030px;color:#c4c7ce;font-weight:400">3 AM</span>
<span class="t" style="left:991.5px;top:179.5px;font-size:5.3px;line-height:6.89px;letter-spacing:-0.036px;color:#c4c7ce;font-weight:400">Now</span>
<span class="t" style="left:58.0px;top:202.1px;font-size:7.0px;line-height:9.1px;letter-spacing:0.140px;color:#e6e8ec;font-weight:400">All</span>
<span class="t" style="left:88.8px;top:202.1px;font-size:7.0px;line-height:9.1px;letter-spacing:-0.056px;color:#e6e8ec;font-weight:400">In Use</span>
<span class="t" style="left:131.3px;top:202.1px;font-size:7.0px;line-height:9.1px;letter-spacing:-0.009px;color:#e6e8ec;font-weight:400">Available</span>
<span class="t" style="left:182.5px;top:202.1px;font-size:7.0px;line-height:9.1px;letter-spacing:-0.071px;color:#e6e8ec;font-weight:400">No PoE</span>
<span class="t" style="left:228.8px;top:202.1px;font-size:7.0px;line-height:9.1px;letter-spacing:-0.377px;color:#e6e8ec;font-weight:400">FE</span>
<span class="t" style="left:260.0px;top:202.1px;font-size:7.0px;line-height:9.1px;letter-spacing:-0.272px;color:#e6e8ec;font-weight:400">GbE</span>
<span class="t" style="left:297.0px;top:202.1px;font-size:7.0px;line-height:9.1px;letter-spacing:-0.098px;color:#e6e8ec;font-weight:400">2.5 GbE</span>
<span class="t" style="left:65.7px;top:225.6px;font-size:7.0px;line-height:9.1px;letter-spacing:0.114px;color:#5993dc;font-weight:400">Port</span>
<span class="t" style="left:231.2px;top:225.6px;font-size:7.0px;line-height:9.1px;letter-spacing:-0.070px;color:#f2f3f5;font-weight:700">Name</span>
<span class="t" style="left:290.0px;top:225.6px;font-size:7.0px;line-height:9.1px;letter-spacing:-0.018px;color:#f2f3f5;font-weight:700">Operation</span>
<span class="t" style="left:351.6px;top:225.6px;font-size:7.0px;line-height:9.1px;letter-spacing:-0.223px;color:#f2f3f5;font-weight:700">Speed</span>
<span class="t" style="left:400.8px;top:225.6px;font-size:7.0px;line-height:9.1px;letter-spacing:-0.130px;color:#f2f3f5;font-weight:700">Connection</span>
<span class="t" style="left:514.6px;top:225.6px;font-size:7.0px;line-height:9.1px;letter-spacing:-0.100px;color:#f2f3f5;font-weight:700">Profile</span>
<span class="t" style="left:590.0px;top:225.6px;font-size:7.0px;line-height:9.1px;letter-spacing:0.117px;color:#f2f3f5;font-weight:700">Native VLAN</span>
<span class="t" style="left:676.7px;top:225.6px;font-size:7.0px;line-height:9.1px;letter-spacing:0.025px;color:#f2f3f5;font-weight:700">Activity</span>
<span class="t" style="left:763.0px;top:225.6px;font-size:7.0px;line-height:9.1px;letter-spacing:-0.249px;color:#f2f3f5;font-weight:700">Tx Sum</span>
<span class="t" style="left:824.6px;top:225.6px;font-size:7.0px;line-height:9.1px;letter-spacing:-0.277px;color:#f2f3f5;font-weight:700">Rx Sum</span>
<span class="t" style="left:886.1px;top:225.6px;font-size:7.0px;line-height:9.1px;letter-spacing:-0.200px;color:#f2f3f5;font-weight:700">Tx Rate</span>
<span class="t" style="left:947.4px;top:225.6px;font-size:7.0px;line-height:9.1px;letter-spacing:-0.154px;color:#f2f3f5;font-weight:700">Rx Rate</span>
<span class="t" style="left:80.5px;top:241.7px;font-size:7.0px;line-height:9.1px;letter-spacing:-0.106px;color:#e6e8ec;font-weight:400">2</span>
<span class="t" style="left:109.5px;top:241.7px;font-size:7.0px;line-height:9.1px;letter-spacing:0.045px;color:#e6e8ec;font-weight:400">USW Flex 2.5G Mighty Gadget Offi...</span>
<span class="t" style="left:231.2px;top:241.7px;font-size:7.0px;line-height:9.1px;letter-spacing:0.019px;color:#e6e8ec;font-weight:400">Port 2</span>
<span class="t" style="left:351.6px;top:241.7px;font-size:7.0px;line-height:9.1px;letter-spacing:-0.113px;color:#76a6de;font-weight:400">2.5 GbE</span>
<span class="t" style="left:413.1px;top:241.7px;font-size:7.0px;line-height:9.1px;letter-spacing:0.157px;color:#e6e8ec;font-weight:400">Office</span>
<span class="t" style="left:514.6px;top:241.7px;font-size:7.0px;line-height:9.1px;letter-spacing:-0.044px;color:#e6e8ec;font-weight:400">-</span>
<span class="t" style="left:590.0px;top:241.7px;font-size:7.0px;line-height:9.1px;letter-spacing:0.087px;color:#e6e8ec;font-weight:400">Default</span>
<span class="t" style="left:763.0px;top:241.7px;font-size:7.0px;line-height:9.1px;letter-spacing:0.059px;color:#b46fcc;font-weight:400">4.43 GB</span>
<span class="t" style="left:824.6px;top:241.7px;font-size:7.0px;line-height:9.1px;letter-spacing:-0.175px;color:#9fc1ea;font-weight:400">132 GB</span>
<span class="t" style="left:886.1px;top:241.7px;font-size:7.0px;line-height:9.1px;letter-spacing:-0.024px;color:#b46fcc;font-weight:400">428 Kbps</span>
<span class="t" style="left:947.4px;top:241.7px;font-size:7.0px;line-height:9.1px;letter-spacing:-0.262px;color:#9fc1ea;font-weight:400">137 Kbps</span>
<span class="t" style="left:80.5px;top:258.9px;font-size:7.0px;line-height:9.1px;letter-spacing:-0.106px;color:#e6e8ec;font-weight:400">3</span>
<span class="t" style="left:109.5px;top:258.9px;font-size:7.0px;line-height:9.1px;letter-spacing:0.045px;color:#e6e8ec;font-weight:400">USW Flex 2.5G Mighty Gadget Offi...</span>
<span class="t" style="left:231.2px;top:258.9px;font-size:7.0px;line-height:9.1px;letter-spacing:0.019px;color:#e6e8ec;font-weight:400">Port 3</span>
<span class="t" style="left:351.6px;top:258.9px;font-size:7.0px;line-height:9.1px;letter-spacing:-0.272px;color:#5d7291;font-weight:400">GbE</span>
<span class="t" style="left:413.1px;top:258.9px;font-size:7.0px;line-height:9.1px;letter-spacing:0.111px;color:#e6e8ec;font-weight:400">Helium-Hotspot</span>
<span class="t" style="left:514.6px;top:258.9px;font-size:7.0px;line-height:9.1px;letter-spacing:-0.044px;color:#e6e8ec;font-weight:400">-</span>
<span class="t" style="left:590.0px;top:258.9px;font-size:7.0px;line-height:9.1px;letter-spacing:0.087px;color:#e6e8ec;font-weight:400">Default</span>
<span class="t" style="left:763.0px;top:258.9px;font-size:7.0px;line-height:9.1px;letter-spacing:0.059px;color:#b46fcc;font-weight:400">2.46 GB</span>
<span class="t" style="left:824.6px;top:258.9px;font-size:7.0px;line-height:9.1px;letter-spacing:0.032px;color:#9fc1ea;font-weight:400">24.5 MB</span>
<span class="t" style="left:886.1px;top:258.9px;font-size:7.0px;line-height:9.1px;letter-spacing:-0.081px;color:#b46fcc;font-weight:400">40.5 Kbps</span>
<span class="t" style="left:947.4px;top:258.9px;font-size:7.0px;line-height:9.1px;letter-spacing:0.011px;color:#9fc1ea;font-weight:400">242 bps</span>
<span class="t" style="left:80.5px;top:276.4px;font-size:7.0px;line-height:9.1px;letter-spacing:-0.106px;color:#e6e8ec;font-weight:400">4</span>
<span class="t" style="left:109.5px;top:276.4px;font-size:7.0px;line-height:9.1px;letter-spacing:0.045px;color:#e6e8ec;font-weight:400">USW Flex 2.5G Mighty Gadget Offi...</span>
<span class="t" style="left:231.2px;top:276.4px;font-size:7.0px;line-height:9.1px;letter-spacing:0.019px;color:#e6e8ec;font-weight:400">Port 4</span>
<span class="t" style="left:351.6px;top:276.4px;font-size:7.0px;line-height:9.1px;letter-spacing:-0.827px;color:#a8a8a6;font-weight:400">FE</span>
<span class="t" style="left:413.1px;top:276.4px;font-size:7.0px;line-height:9.1px;letter-spacing:-0.015px;color:#e6e8ec;font-weight:400">PowerView Bedroom Blinds</span>
<span class="t" style="left:514.6px;top:276.4px;font-size:7.0px;line-height:9.1px;letter-spacing:-0.044px;color:#e6e8ec;font-weight:400">-</span>
<span class="t" style="left:590.0px;top:276.4px;font-size:7.0px;line-height:9.1px;letter-spacing:0.087px;color:#e6e8ec;font-weight:400">Default</span>
<span class="t" style="left:763.0px;top:276.4px;font-size:7.0px;line-height:9.1px;letter-spacing:0.059px;color:#b46fcc;font-weight:400">2.43 GB</span>
<span class="t" style="left:824.6px;top:276.4px;font-size:7.0px;line-height:9.1px;letter-spacing:0.032px;color:#9fc1ea;font-weight:400">30.8 MB</span>
<span class="t" style="left:886.1px;top:276.4px;font-size:7.0px;line-height:9.1px;letter-spacing:-0.081px;color:#b46fcc;font-weight:400">40.8 Kbps</span>
<span class="t" style="left:947.4px;top:276.4px;font-size:7.0px;line-height:9.1px;letter-spacing:0.011px;color:#9fc1ea;font-weight:400">883 bps</span>
<span class="t" style="left:80.5px;top:293.6px;font-size:7.0px;line-height:9.1px;letter-spacing:-0.106px;color:#e6e8ec;font-weight:400">5</span>
<span class="t" style="left:109.5px;top:293.6px;font-size:7.0px;line-height:9.1px;letter-spacing:0.045px;color:#e6e8ec;font-weight:400">USW Flex 2.5G Mighty Gadget Offi...</span>
<span class="t" style="left:231.2px;top:293.6px;font-size:7.0px;line-height:9.1px;letter-spacing:0.019px;color:#e6e8ec;font-weight:400">Port 5</span>
<span class="t" style="left:351.6px;top:293.6px;font-size:7.0px;line-height:9.1px;letter-spacing:-0.113px;color:#76a6de;font-weight:400">2.5 GbE</span>
<span class="t" style="left:413.1px;top:293.6px;font-size:7.0px;line-height:9.1px;letter-spacing:-0.085px;color:#e6e8ec;font-weight:400">USW Enterprise 24 PoE</span>
<span class="t" style="left:514.6px;top:293.6px;font-size:7.0px;line-height:9.1px;letter-spacing:-0.044px;color:#e6e8ec;font-weight:400">-</span>
<span class="t" style="left:590.0px;top:293.6px;font-size:7.0px;line-height:9.1px;letter-spacing:0.087px;color:#e6e8ec;font-weight:400">Default</span>
<span class="t" style="left:763.0px;top:293.6px;font-size:7.0px;line-height:9.1px;letter-spacing:-0.158px;color:#b46fcc;font-weight:400">132 GB</span>
<span class="t" style="left:824.6px;top:293.6px;font-size:7.0px;line-height:9.1px;letter-spacing:0.016px;color:#9fc1ea;font-weight:400">4.52 GB</span>
<span class="t" style="left:886.1px;top:293.6px;font-size:7.0px;line-height:9.1px;letter-spacing:-0.124px;color:#b46fcc;font-weight:400">140 Kbps</span>
<span class="t" style="left:947.4px;top:293.6px;font-size:7.0px;line-height:9.1px;letter-spacing:-0.062px;color:#9fc1ea;font-weight:400">430 Kbps</span>
</body>
</html>
